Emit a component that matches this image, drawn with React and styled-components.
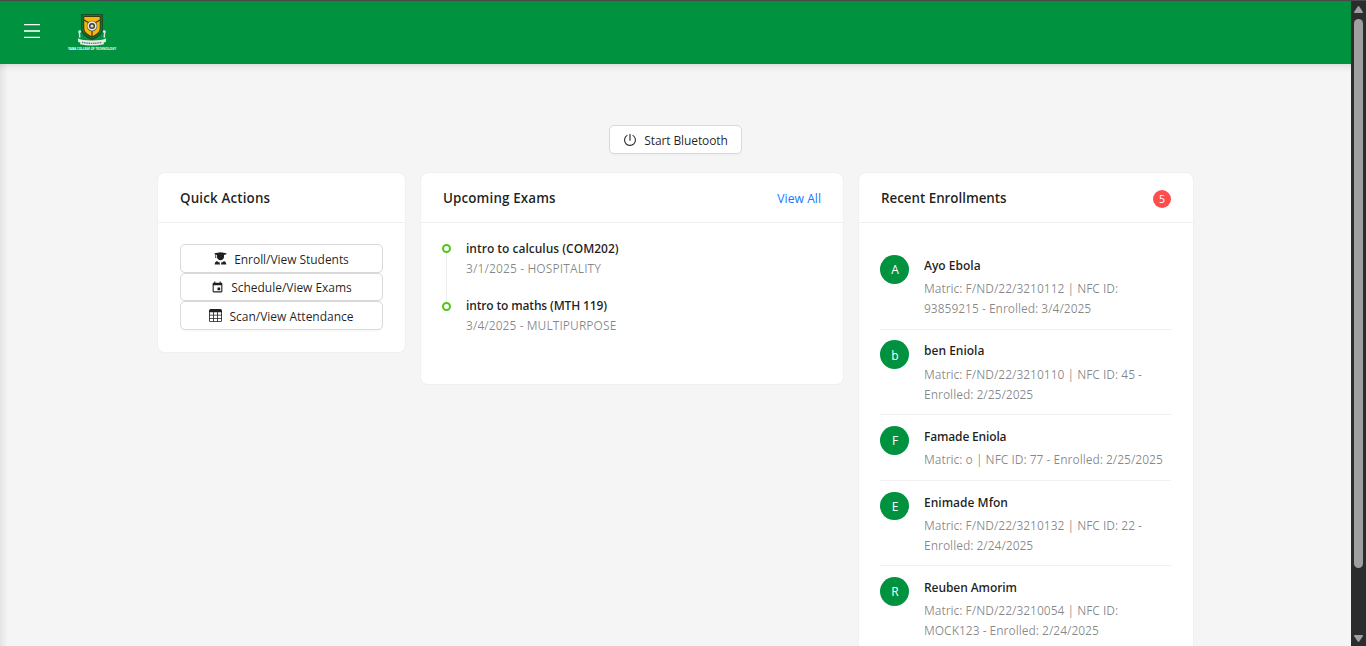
import React from "react";
import styled, { createGlobalStyle } from "styled-components";
import { AiOutlinePoweroff } from "react-icons/ai";
import { MdEvent } from "react-icons/md";
import { BsTable } from "react-icons/bs";

const GlobalStyle = createGlobalStyle`
  * { box-sizing: border-box; }
  html, body { margin: 0; height: 100%; overflow: hidden; }
  body {
    font-family: "Segoe UI", "Open Sans", "Noto Sans", sans-serif;
    font-size: 12px;
    color: rgba(0, 0, 0, 0.88);
    background: #f5f5f5;
  }
`;

const Window = styled.div`
  display: flex;
  height: 646px;
  border-top: 1px solid #4a474e;
  overflow: hidden;
`;

const Page = styled.div`
  flex: 1;
  min-width: 0;
  display: flex;
  flex-direction: column;
  background: #f5f5f5;
`;

const Header = styled.header`
  flex: none;
  display: flex;
  align-items: flex-start;
  height: 63px;
  padding: 12px 24px 0;
  gap: 23px;
  background: #00923f;
`;

const MenuButton = styled.button`
  display: flex;
  width: 16px;
  height: 14px;
  margin-top: 11px;
  padding: 0;
  border: 0;
  background: none;
`;

const Content = styled.main`
  flex: 1;
  min-height: 0;
  display: flex;
  flex-direction: column;
  align-items: center;
  padding-top: 61px;
  background:
    linear-gradient(to bottom, rgba(0, 0, 0, 0.09), rgba(0, 0, 0, 0.03) 4px, transparent 9px),
    linear-gradient(to right, rgba(0, 0, 0, 0.07), rgba(0, 0, 0, 0.03) 4px, transparent 8px);
`;

const Button = styled.button`
  flex: none;
  display: flex;
  align-items: center;
  justify-content: center;
  gap: ${(p) => p.$gap || 7}px;
  width: ${(p) => p.$width || "100%"};
  height: ${(p) => p.$height || 28.8}px;
  padding: ${(p) => p.$drop || 1}px 0 0;
  border: 1px solid #d9d9d9;
  border-radius: 5px;
  background: #fff;
  box-shadow: 0 2px 0 rgba(0, 0, 0, 0.02);
  color: rgba(0, 0, 0, 0.88);
  font: inherit;
  letter-spacing: ${(p) => p.$track || 0}px;
  white-space: nowrap;

  svg { flex: none; margin-top: -1px; }
`;

const Cards = styled.div`
  flex: none;
  display: flex;
  align-items: flex-start;
  gap: 14px;
  margin-top: 18px;
`;

const Card = styled.section`
  width: ${(p) => p.$width}px;
  height: ${(p) => p.$height}px;
  border: 1px solid #f0f0f0;
  border-radius: 8px;
  background: #fff;
`;

const CardHeader = styled.div`
  display: flex;
  align-items: center;
  justify-content: space-between;
  height: 50px;
  padding: 1px 22px 0;
  border-bottom: 1px solid #f0f0f0;
`;

const CardTitle = styled.h2`
  margin: 0;
  font-size: 13.4px;
  font-weight: 600;
  line-height: 20px;
  letter-spacing: ${(p) => p.$track || 0}px;
`;

const ViewAll = styled.a`
  margin-top: 2px;
  color: #1677ff;
  font-size: 12.2px;
  line-height: 20px;
`;

const Count = styled.span`
  display: flex;
  align-items: center;
  justify-content: center;
  width: 18px;
  height: 18px;
  margin-top: 2px;
  border-radius: 50%;
  background: #ff4d4f;
  color: #fff;
  font-size: 10.5px;
`;

const Actions = styled.div`
  padding: 20.9px 22px 0;
`;

const Timeline = styled.ul`
  margin: 0;
  padding: 16px 21px 0;
  list-style: none;
`;

const TimelineItem = styled.li`
  display: flex;
  gap: 15px;
  height: 57px;
`;

const Rail = styled.div`
  display: flex;
  flex-direction: column;
  align-items: center;
  width: 9px;
  padding-top: 5px;

  ${TimelineItem}:last-child & { padding-top: 6px; }
`;

const Dot = styled.span`
  flex: none;
  width: 9px;
  height: 9px;
  border: 2px solid #52c41a;
  border-radius: 50%;
`;

const Tail = styled.span`
  flex: none;
  width: 1px;
  height: 49px;
  background: #ececec;
`;

const Name = styled.div`
  font-weight: 600;
  line-height: 20px;
  letter-spacing: ${(p) => p.$track || 0}px;
  white-space: nowrap;
`;

const Detail = styled.div`
  color: rgba(0, 0, 0, 0.47);
  line-height: 19.8px;
  letter-spacing: ${(p) => p.$track || 0}px;
  white-space: nowrap;
`;

const List = styled.ul`
  margin: 0;
  padding: 21.1px 22px 0 21px;
  list-style: none;
`;

const Enrollment = styled.li`
  display: flex;
  gap: 15px;
  height: ${(p) => (p.$lines === 1 ? 65.7 : 85.5)}px;
  padding-top: 10.8px;
  border-bottom: 1px solid #f0f0f0;

  ${Name} {
    margin: 1px 0 3.6px;
    line-height: 19.8px;
  }
`;

const Avatar = styled.span`
  flex: none;
  display: flex;
  align-items: center;
  justify-content: center;
  width: 29px;
  height: 28.8px;
  padding: 1px 0 0 1px;
  border-radius: 50%;
  background: #00923f;
  color: #fff;
`;

const ScrollBar = styled.div`
  display: flex;
  flex-direction: column;
  align-items: center;
  justify-content: space-between;
  width: 15px;
  padding: 5px 0 4px;
  background: #2c2c2c;
`;

const Thumb = styled.div`
  width: 9px;
  height: 549px;
  margin-bottom: auto;
  margin-top: 6px;
  border-radius: 5px;
  background: #9f9f9f;
`;

const ArrowIcon = styled.svg`
  flex: none;
`;

const Arrow = ({ down }) => (
  <ArrowIcon width="9" height="7" viewBox="0 0 9 7">
    <path
      d={down ? "M.8 0h7.4q.9.3.6 1.2L5.4 6.3q-.9 1.2-1.8 0L.2 1.2Q-.1.3.8 0z" : "M.8 7h7.4q.9-.3.6-1.2L5.4.7q-.9-1.2-1.8 0L.2 5.8Q-.1 6.7.8 7z"}
      fill="#9f9f9f"
    />
  </ArrowIcon>
);

const GraduateIcon = () => (
  <svg width="13" height="13" viewBox="0 0 13 13" fill="currentColor">
    <path d="M.6 1.300L6.500.2l5.900 1.100v1L10 2.900v2.200c0 1.900-1.500 3.200-3.500 3.200S3 7 3 5.100V2.900l-.9-.2v1.500l.4 1.500H1l.4-1.500V2.500L.6 2.300z" />
    <path d="M.7 12.500c0-1.800.8-3.100 2.500-3.400l1.100 1.500.9-1 .9 2.900zM12.300 12.500c0-1.800-.8-3.100-2.500-3.400l-1.100 1.500-.9-1-.9 2.900z" />
  </svg>
);

const CrestImage = styled.svg`
  flex: none;
  overflow: visible;
`;

const Crest = () => (
  <CrestImage width="58" height="44" viewBox="63 13 58 44">
    <path d="M81 14h22v15.500q0 6-11 10.800-11-4.800-11-10.800z" fill="#174d2a" />
    <path d="M82.400 15.200h19.200V29q0 5.200-9.600 9.600-9.600-4.400-9.600-9.600z" fill="#00923f" />
    <path d="M83.300 16h17.400v13q0 4.700-8.700 8.800-8.700-4.100-8.700-8.800z" fill="#3d3514" />
    <path d="M84.300 17h15.400v11.600q0 4.200-7.700 8-7.700-3.800-7.700-8z" fill="#f5b90b" />
    <path d="M84 20l8 4.500 8-4.500M92 27v10" fill="none" stroke="#3d3514" strokeWidth="1.200" />
    <circle cx="92" cy="26" r="5.300" fill="#40402f" />
    <circle cx="92" cy="26" r="3.900" fill="none" stroke="#e8e8e2" strokeWidth="1.700" />
    <circle cx="92" cy="26" r="1.600" fill="#dcdcd4" />
    <path d="M78 31.400l2-1.600 1.400 1.800-1.300 1.700.5 4-1.600.5-.2-4.400zM106 31.400l-2-1.600-1.400 1.800 1.300 1.700-.5 4 1.600.5.2-4.400z" fill="#d7e5d9" />
    <path d="M77.800 38.200q3.600 2.200 14.200 2.200t14.200-2.200l-.5 4-2 .1.200 2q-11.900 2.400-23.800 0l.2-2-2-.1z" fill="#e7eee7" />
    <path d="M82 42.300q10 2.100 20 0" fill="none" stroke="#687e6c" strokeWidth="1.400" strokeDasharray="1.500 .7" />
    <text x="68" y="49.800" textLength="48" lengthAdjust="spacingAndGlyphs" fontFamily="Open Sans, sans-serif" fontWeight="700" fontSize="3.400" fill="#fff">YABA COLLEGE OF TECHNOLOGY</text>
  </CrestImage>
);

const exams = [
  { name: "intro to calculus (COM202)", detail: "3/1/2025 - HOSPITALITY", track: 0, detailTrack: 0.12 },
  { name: "intro to maths (MTH 119)", detail: "3/4/2025 - MULTIPURPOSE", track: -0.15, detailTrack: 0.06 },
];

const students = [
  { name: "Ayo Ebola", lines: ["Matric: F/ND/22/3210112 | NFC ID:", "93859215 - Enrolled: 3/4/2025"] },
  { name: "ben Eniola", lines: ["Matric: F/ND/22/3210110 | NFC ID: 45 -", "Enrolled: 2/25/2025"] },
  { name: "Famade Eniola", track: -0.17, lines: ["Matric: o | NFC ID: 77 - Enrolled: 2/25/2025"] },
  { name: "Enimade Mfon", lines: ["Matric: F/ND/22/3210132 | NFC ID: 22 -", "Enrolled: 2/24/2025"] },
  { name: "Reuben Amorim", track: -0.08, lines: ["Matric: F/ND/22/3210054 | NFC ID:", "MOCK123 - Enrolled: 2/24/2025"] },
];

export default function App() {
  return (
    <>
      <GlobalStyle />
      <Window>
        <Page>
          <Header>
            <MenuButton aria-label="Menu">
              <svg width="16" height="14" viewBox="0 0 16 14">
                <path d="M0 .6h16M0 13.400h16" stroke="#fff" strokeWidth="1.200" />
                <path d="M0 7h16" stroke="#fff" strokeOpacity=".78" strokeWidth="2" />
              </svg>
            </MenuButton>
            <Crest />
          </Header>
          <Content>
            <Button $width="133px" $height={29} $track={-0.1}>
              <AiOutlinePoweroff size={14} />
              Start Bluetooth
            </Button>
            <Cards>
              <Card $width={249} $height={181}>
                <CardHeader><CardTitle $track={0.15}>Quick Actions</CardTitle></CardHeader>
                <Actions>
                  <Button $track={-0.05} $drop={2.4}><GraduateIcon />Enroll/View Students</Button>
                  <Button $track={-0.03}><MdEvent size={13} />Schedule/View Exams</Button>
                  <Button><BsTable size={13} />Scan/View Attendance</Button>
                </Actions>
              </Card>
              <Card $width={424} $height={213}>
                <CardHeader>
                  <CardTitle $track={0.13}>Upcoming Exams</CardTitle>
                  <ViewAll>View All</ViewAll>
                </CardHeader>
                <Timeline>
                  {exams.map((exam, i) => (
                    <TimelineItem key={exam.name}>
                      <Rail><Dot />{i === 0 && <Tail />}</Rail>
                      <div>
                        <Name $track={exam.track}>{exam.name}</Name>
                        <Detail $track={exam.detailTrack}>{exam.detail}</Detail>
                      </div>
                    </TimelineItem>
                  ))}
                </Timeline>
              </Card>
              <Card $width={336} $height={520}>
                <CardHeader>
                  <CardTitle $track={-0.03}>Recent Enrollments</CardTitle>
                  <Count>5</Count>
                </CardHeader>
                <List>
                  {students.map((s) => (
                    <Enrollment key={s.name} $lines={s.lines.length}>
                      <Avatar>{s.name[0]}</Avatar>
                      <div>
                        <Name $track={s.track}>{s.name}</Name>
                        {s.lines.map((line) => <Detail key={line} $track={-0.01}>{line}</Detail>)}
                      </div>
                    </Enrollment>
                  ))}
                </List>
              </Card>
            </Cards>
          </Content>
        </Page>
        <ScrollBar>
          <Arrow />
          <Thumb />
          <Arrow down />
        </ScrollBar>
      </Window>
    </>
  );
}
